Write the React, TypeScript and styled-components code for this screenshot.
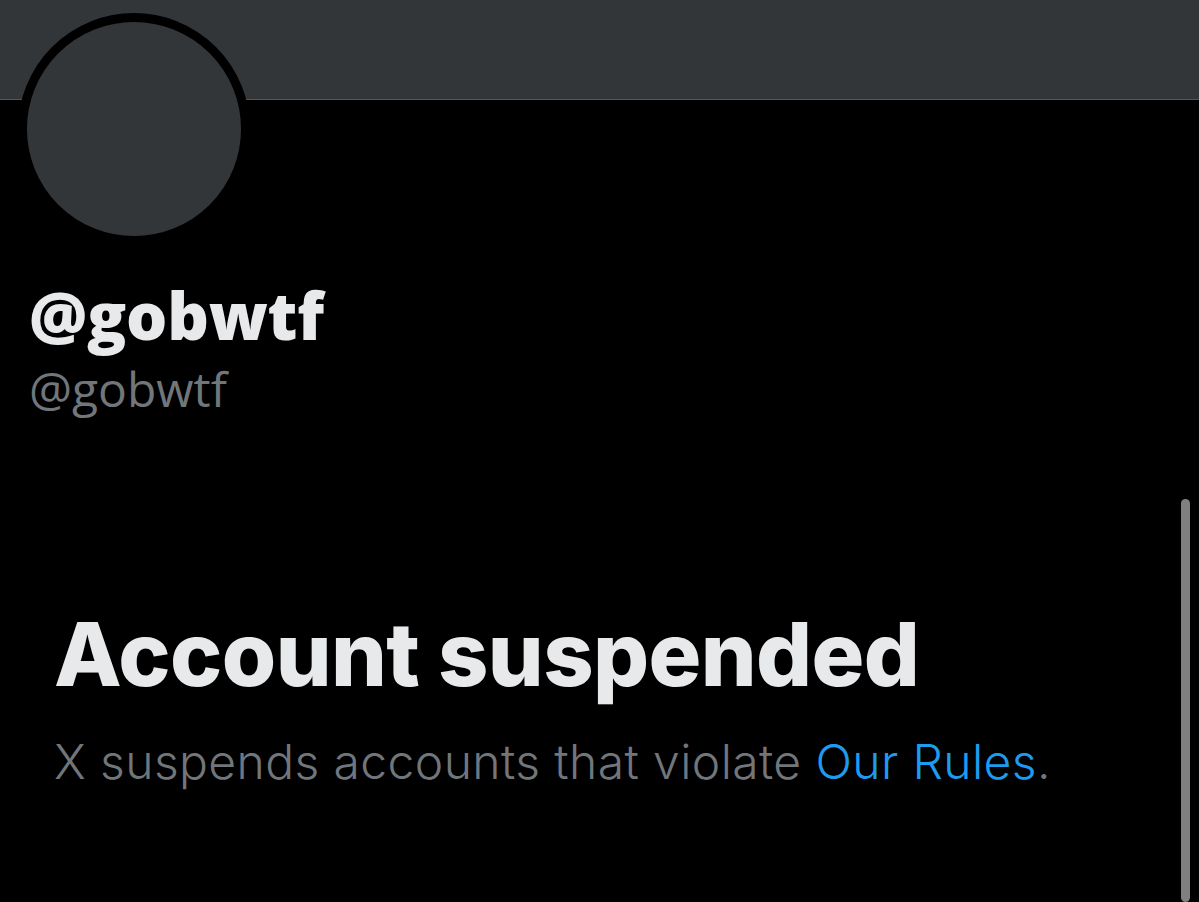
import React from "react";
import styled, { createGlobalStyle } from "styled-components";

const Global = createGlobalStyle`
  html, body { margin: 0; padding: 0; background: #000; }
  body { width: 1199px; height: 902px; overflow: hidden; }
`;

const Page = styled.div`
  position: relative;
  width: 1199px;
  height: 902px;
  background: #000;
  display: flex;
  flex-direction: column;
  overflow: hidden;
`;

const Banner = styled.div`
  height: 99px;
  background: #333639;
  border-bottom: 1px solid #55585b;
  flex-shrink: 0;
`;

const Avatar = styled.div`
  width: 214px;
  height: 214px;
  border-radius: 50%;
  background: #333639;
  border: 9px solid #000;
  margin: -87px 0 0 18px;
  flex-shrink: 0;
`;

const NameBlock = styled.div`
  display: flex;
  flex-direction: column;
  padding: 32px 0 0 29px;
`;

const DisplayName = styled.div`
  font-family: "Open Sans", sans-serif;
  font-weight: 800;
  font-size: 65px;
  line-height: 76px;
  color: #e7e9ea;
  letter-spacing: -0.3px;
`;

const Handle = styled.div`
  font-family: "Open Sans", sans-serif;
  font-weight: 400;
  font-size: 48px;
  line-height: 56px;
  margin-top: 8px;
  color: #71767b;
`;

const Notice = styled.div`
  display: flex;
  flex-direction: column;
  padding: 187px 0 0 54px;
`;

const Title = styled.div`
  font-family: "Inter", sans-serif;
  font-weight: 800;
  font-size: 88px;
  line-height: 100px;
  color: #e7e9ea;
  letter-spacing: -0.6px;
`;

const Body = styled.div`
  font-family: "Inter", sans-serif;
  font-weight: 300;
  font-size: 48px;
  line-height: 60px;
  color: #71767b;
  margin-top: 28px;
  letter-spacing: 0.4px;
`;

const RulesLink = styled.a`
  color: #1d9bf0;
  text-decoration: none;
`;

const Scrollbar = styled.div`
  position: absolute;
  right: 9px;
  top: 499px;
  width: 9px;
  height: 403px;
  border-radius: 5px;
  background: #808080;
`;

export default function App() {
  return (
    <Page>
      <Global />
      <Banner />
      <Avatar />
      <NameBlock>
        <DisplayName>@gobwtf</DisplayName>
        <Handle>@gobwtf</Handle>
      </NameBlock>
      <Notice>
        <Title>Account suspended</Title>
        <Body>
          X suspends accounts that violate <RulesLink href="#">Our Rules</RulesLink>.
        </Body>
      </Notice>
      <Scrollbar />
    </Page>
  );
}
